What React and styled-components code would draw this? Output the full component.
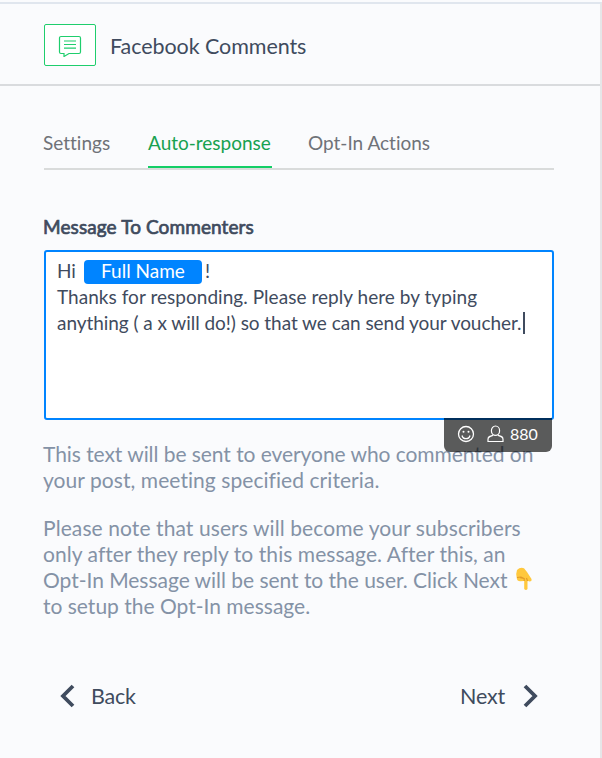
import styled, { createGlobalStyle } from 'styled-components';

const GlobalStyle = createGlobalStyle`
    * {
        box-sizing: border-box;
    }
    body {
        margin: 0;
        background-color: #fafbfd;
        font-family: Lato, "Liberation Sans", sans-serif;
        font-variant-ligatures: none;
        color: #3f4b5e;
    }
`
const Panel = styled.div`
    width: 602px;
    height: 758px;
    padding-top: 2px;
    overflow: hidden;
`
const PanelBody = styled.div`
    height: 756px;
    border-top: 2px solid #e0e6ee;
    border-right: 2px solid #e6e6e8;
`
const Header = styled.header`
    display: flex;
    align-items: center;
    gap: 14px;
    height: 82px;
    padding: 0 0 0 44px;
    border-bottom: 2px solid #d9dbde;
`
const IconBox = styled.div`
    display: flex;
    align-items: center;
    justify-content: center;
    width: 52px;
    height: 42px;
    margin-top: 2px;
    border: 1px solid #1fce6d;
    border-radius: 2px;
    background-color: #fff;
`
const Title = styled.h1`
    margin: 3px 0 0;
    font-size: 21.5px;
    font-weight: 400;
    line-height: 26px;
    letter-spacing: -0.07px;
`
const Content = styled.main`
    padding: 44px 46px 0 43px;
`
const Tabs = styled.nav`
    display: flex;
    gap: 37px;
    height: 40px;
    margin-left: 1px;
    border-bottom: 2px solid #d9dbdb;
`
const Tab = styled.a`
    height: 38px;
    width: ${(props) => props.$width}px;
    margin-left: -1px;
    border-bottom: ${(props) => (props.$active ? '2px solid #13ce66' : '0')};
    font-size: 19px;
    line-height: 26px;
    white-space: nowrap;
    color: ${(props) => (props.$active ? '#17a150' : '#6f7278')};
`
const Label = styled.h2`
    margin: 44px 0 10px;
    font-size: 19px;
    font-weight: 400;
    line-height: 26px;
    letter-spacing: 0.1px;
    -webkit-text-stroke: 0.7px #3f4b5e;
`
const EditorWrap = styled.div`
    position: relative;
    margin-left: 1px;
`
const Editor = styled.div`
    height: 170px;
    padding: 6px 0 0 11px;
    border: 2px solid #0084ff;
    border-radius: 3px;
    background-color: #fff;
    font-size: 19px;
    line-height: 26px;
    white-space: nowrap;
`
const Line = styled.div`
    display: flex;
    align-items: center;
    height: 26px;
    letter-spacing: ${(props) => props.$spacing || 0}px;
`
const Variable = styled.span`
    width: 118px;
    height: 24px;
    margin: 2px 3px 0 8px;
    border-radius: 4px;
    background-color: #0084ff;
    color: #fff;
    line-height: 22px;
    text-align: center;
`
const Caret = styled.span`
    width: 2px;
    height: 22px;
    margin-left: 1px;
    background-color: #3f4b5e;
`
// hangs below the editor and covers the start of the help text
const Toolbar = styled.div`
    position: absolute;
    top: 168px;
    right: 2px;
    display: flex;
    align-items: center;
    width: 108px;
    height: 34px;
    padding: 0 0 3px 13px;
    border-radius: 0 0 6px 6px;
    background-color: rgba(0, 0, 0, 0.64);
    color: #fff;
    font-size: 16px;
`
const Count = styled.span`
    margin: 1px 0 0 6px;
    line-height: 20px;
`
const Help = styled.p`
    margin: ${(props) => props.$top}px 0 0;
    font-size: 21px;
    line-height: 26px;
    color: #8492a6;
    white-space: nowrap;
`
const HelpLine = styled.span`
    display: flex;
    height: 26px;
    letter-spacing: ${(props) => props.$spacing || 0}px;
`
const Footer = styled.footer`
    display: flex;
    justify-content: space-between;
    margin: 64px 15px 0 17px;
`
const NavButton = styled.button`
    display: flex;
    align-items: center;
    gap: ${(props) => props.$gap}px;
    padding: 0;
    border: none;
    background: none;
    color: #3f4b5e;
    font-family: inherit;
    font-size: 21.5px;
    line-height: 26px;
    letter-spacing: -0.2px;
`
const UserSvg = styled.svg`
    margin-left: 12px;
`
const PointSvg = styled.svg`
    margin-left: 8px;
`

const CommentIcon = () => (
    <svg width="24" height="24" viewBox="0 0 24 24" fill="none" stroke="#1fce6d">
        <path d="M3 3.500h18a1.500 1.500 0 0 1 1.500 1.500v14a1.500 1.500 0 0 1-1.500 1.500H11l-5 3v-3H3a1.500 1.500 0 0 1-1.500-1.500V5A1.500 1.500 0 0 1 3 3.500z" strokeWidth="1.200" />
        <path d="M6 8h12M6 11.500h12M6 15.200h12" strokeWidth="1.200" />
    </svg>
);

const SmileIcon = () => (
    <svg width="18" height="18" viewBox="0 0 18 18" fill="none" stroke="#fff" strokeWidth="1.300">
        <circle cx="9" cy="9" r="7.500" />
        <path d="M5 10.500a4.100 4.100 0 0 0 8 0" />
        <circle cx="6.500" cy="6.700" r="1" fill="#fff" stroke="none" />
        <circle cx="11.500" cy="6.700" r="1" fill="#fff" stroke="none" />
    </svg>
);

const UserIcon = () => (
    <UserSvg width="17" height="18" viewBox="0 0 17 18" fill="none" stroke="#fff" strokeWidth="1.200">
        <ellipse cx="8.500" cy="5.700" rx="4.100" ry="4.700" />
        <path d="M6 10.300c-3 .8-5 1.300-5 4v2.200h15v-2.200c0-2.700-2-3.200-5-4" />
    </UserSvg>
);

const PointDown = () => (
    <PointSvg width="18" height="24" viewBox="0 0 18 24">
        <path d="M2 3Q5 0 9 1.200L12 5l4.500 7q.5 2.500-2 2.500l-2-.7V22q-1.500 2-3.300 0v-8l-4 .3q-3.200 0-3.400-3Q.5 7 2 3z" fill="#ffc83d" />
        <path d="M9.200 14v-2.500l-4-.7M2 10.500l4-.5 3 1.500M12.500 14l-1-3" stroke="#e39a27" strokeWidth="1.100" fill="none" />
    </PointSvg>
);

const Chevron = ({ points }) => (
    <svg width="16" height="24" viewBox="0 0 16 24" fill="none" stroke="#3f4b5e" strokeWidth="3.800">
        <polyline points={points} />
    </svg>
);

const App = () => {
    return (
        <Panel>
            <GlobalStyle />
            <PanelBody>
                <Header>
                    <IconBox><CommentIcon /></IconBox>
                    <Title>Facebook Comments</Title>
                </Header>
                <Content>
                    <Tabs>
                        <Tab $width={69}>Settings</Tab>
                        <Tab $width={124} $active>Auto-response</Tab>
                        <Tab $width={124}>Opt-In Actions</Tab>
                    </Tabs>
                    <Label>Message To Commenters</Label>
                    <EditorWrap>
                        <Editor>
                            <Line>Hi <Variable>Full Name</Variable>!</Line>
                            <Line $spacing={0.04}>Thanks for responding. Please reply here by typing</Line>
                            <Line $spacing={-0.05}>anything ( a x will do!) so that we can send your voucher.<Caret /></Line>
                        </Editor>
                        <Toolbar>
                            <SmileIcon />
                            <UserIcon />
                            <Count>880</Count>
                        </Toolbar>
                    </EditorWrap>
                    <Help $top={21}>
                        <HelpLine $spacing={-0.06}>This text will be sent to everyone who commented on</HelpLine>
                        <HelpLine $spacing={0.06}>your post, meeting specified criteria.</HelpLine>
                    </Help>
                    <Help $top={22}>
                        <HelpLine $spacing={0.09}>Please note that users will become your subscribers</HelpLine>
                        <HelpLine $spacing={0.06}>only after they reply to this message. After this, an</HelpLine>
                        <HelpLine $spacing={-0.03}>Opt-In Message will be sent to the user. Click Next <PointDown /></HelpLine>
                        <HelpLine>to setup the Opt-In message.</HelpLine>
                    </Help>
                    <Footer>
                        <NavButton $gap={15}>
                            <Chevron points="13,2 3,12 13,22" />
                            Back
                        </NavButton>
                        <NavButton $gap={18}>
                            Next
                            <Chevron points="2,2 12,12 2,22" />
                        </NavButton>
                    </Footer>
                </Content>
            </PanelBody>
        </Panel>
    );
}

export default App;
